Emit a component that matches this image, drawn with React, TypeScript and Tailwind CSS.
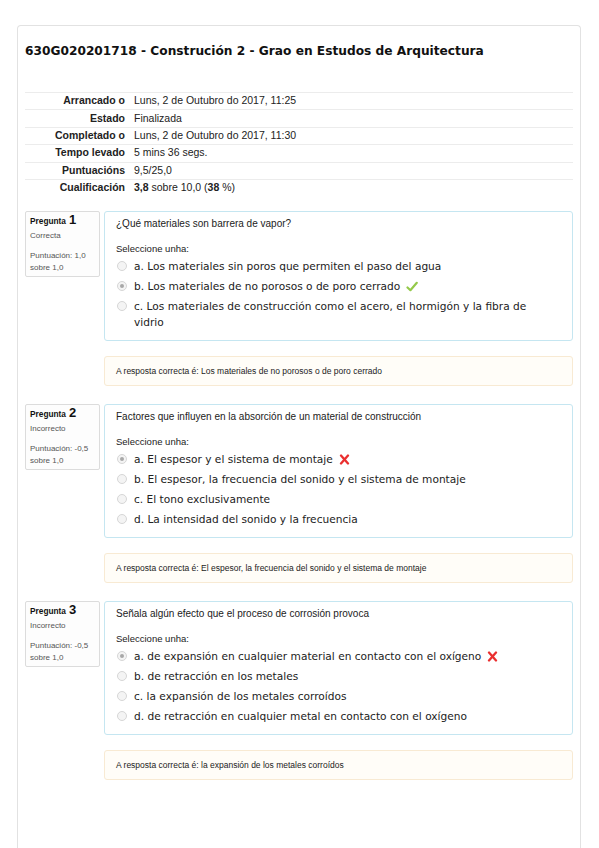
import React from "react";

type Question = {
  num: number;
  state: string;
  score: string;
  text: string;
  options: string[];
  selected: number;
  correct: boolean;
  answer: string;
};

const QUESTIONS: Question[] = [
  {
    num: 1,
    state: "Correcta",
    score: "1,0",
    text: "¿Qué materiales son barrera de vapor?",
    options: [
      "a. Los materiales sin poros que permiten el paso del agua",
      "b. Los materiales de no porosos o de poro cerrado",
      "c. Los materiales de construcción como el acero, el hormigón y la fibra de vidrio",
    ],
    selected: 1,
    correct: true,
    answer: "Los materiales de no porosos o de poro cerrado",
  },
  {
    num: 2,
    state: "Incorrecto",
    score: "-0,5",
    text: "Factores que influyen en la absorción de un material de construcción",
    options: [
      "a. El espesor y el sistema de montaje",
      "b. El espesor, la frecuencia del sonido y el sistema de montaje",
      "c. El tono exclusivamente",
      "d. La intensidad del sonido y la frecuencia",
    ],
    selected: 0,
    correct: false,
    answer: "El espesor, la frecuencia del sonido y el sistema de montaje",
  },
  {
    num: 3,
    state: "Incorrecto",
    score: "-0,5",
    text: "Señala algún efecto que el proceso de corrosión provoca",
    options: [
      "a. de expansión en cualquier material en contacto con el oxígeno",
      "b. de retracción en los metales",
      "c. la expansión de los metales corroídos",
      "d. de retracción en cualquier metal en contacto con el oxígeno",
    ],
    selected: 0,
    correct: false,
    answer: "la expansión de los metales corroídos",
  },
];

const SUMMARY: [string, React.ReactNode][] = [
  ["Arrancado o", "Luns, 2 de Outubro do 2017, 11:25"],
  ["Estado", "Finalizada"],
  ["Completado o", "Luns, 2 de Outubro do 2017, 11:30"],
  ["Tempo levado", "5 mins 36 segs."],
  ["Puntuacións", "9,5/25,0"],
  [
    "Cualificación",
    <>
      <b>3,8</b> sobre 10,0 (<b>38</b> %)
    </>,
  ],
];

function Check() {
  return (
    <svg width="12" height="11" viewBox="0 0 12 11" className="inline-block ml-[6px] -mt-[2px]">
      <path d="M1.5 6.5 L4.4 9.2 L10.8 1.8" fill="none" stroke="#94c94a" strokeWidth="2.2" strokeLinecap="round" strokeLinejoin="round" />
    </svg>
  );
}

function Cross() {
  return (
    <svg width="11" height="11" viewBox="0 0 11 11" className="inline-block ml-[6px] -mt-[2px]">
      <path d="M2 1.5 L9 9.5 M9 1.5 L2 9.5" fill="none" stroke="#ea2f2f" strokeWidth="2.3" strokeLinecap="round" />
    </svg>
  );
}

function Radio({ checked }: { checked: boolean }) {
  return (
    <span className="inline-flex items-center justify-center w-[10px] h-[10px] rounded-full border border-[#d6d6d6] bg-[#f4f4f4] shrink-0 mt-[3px]">
      {checked && <span className="w-[4px] h-[4px] rounded-full bg-[#a8a8a8]" />}
    </span>
  );
}

function QuestionBlock({ q }: { q: Question }) {
  return (
    <div className="flex gap-[4px] mb-[18px]">
      <div className="w-[75px] h-[66px] shrink-0 border border-[#dcdcdc] rounded-[2px] bg-[#fdfdfd] px-[4px] text-[#555]">
        <div className="text-[#111] leading-[12px] mt-[1px]">
          <span className="text-[8.3px] font-bold">Pregunta</span>
          <span className="text-[13px] font-bold ml-[3px]">{q.num}</span>
        </div>
        <div className="text-[8px] leading-[10px] mt-[4px]">{q.state}</div>
        <div className="text-[8px] leading-[12px] mt-[9px]">Puntuación: {q.score}</div>
        <div className="text-[8px] leading-[12px]">sobre 1,0</div>
      </div>
      <div className="flex-1 flex flex-col">
        <div className="border border-[#c5e6f1] rounded-[3px] bg-white pl-[11px] pr-[24px] pt-[5px] pb-[10px]">
          <p className="text-[10px] leading-[14px] text-[#222]">{q.text}</p>
          <p className="text-[9.5px] leading-[12px] text-[#222] mt-[12px]">Seleccione unha:</p>
          <div className="flex flex-col gap-[4px] mt-[3px] font-['DejaVu_Sans',sans-serif] text-[10.6px] text-[#222]">
            {q.options.map((o, i) => (
              <div key={o} className="flex gap-[7px] pl-[1px] leading-[16px]">
                <Radio checked={i === q.selected} />
                <span>
                  {o}
                  {i === q.selected && (q.correct ? <Check /> : <Cross />)}
                </span>
              </div>
            ))}
          </div>
        </div>
        <div className="mt-[15px] border border-[#f8ead3] rounded-[3px] bg-[#fffdf8] pl-[11px] pt-[8px] pb-[8px] text-[8.5px] leading-[12px] text-[#222]">
          A resposta correcta é: {q.answer}
        </div>
      </div>
    </div>
  );
}

export default function App() {
  return (
    <div className="min-h-screen bg-white pt-[25px] pl-[17px] pr-[18px] font-['Liberation_Sans',Arial,sans-serif]">
      <div className="border border-b-0 border-[#e2e2e2] rounded-t-[4px] px-[7px] pt-[16px] min-h-[830px]">
        <h2 className="font-['DejaVu_Sans',sans-serif] font-bold text-[12.2px] leading-[18px] text-[#111]">
          630G020201718 - Construción 2 - Grao en Estudos de Arquitectura
        </h2>
        <div className="mt-[32px] mb-[15px] text-[10.5px] text-[#222]">
          {SUMMARY.map(([k, v]) => (
            <div key={k} className="flex h-[17.4px] items-center border-t border-[#ececec]">
              <div className="w-[100px] text-right font-bold">{k}</div>
              <div className="pl-[9px]">{v}</div>
            </div>
          ))}
        </div>
        {QUESTIONS.map((q) => (
          <QuestionBlock key={q.num} q={q} />
        ))}
      </div>
    </div>
  );
}
